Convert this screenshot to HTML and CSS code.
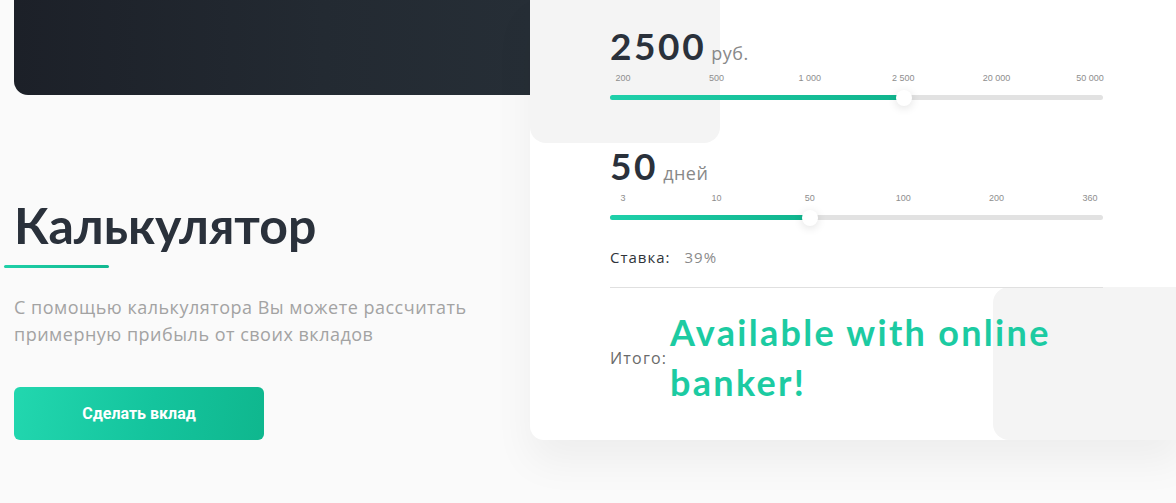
FILE: index.html
```html
<!DOCTYPE html>
<html lang="ru">
<head>
<meta charset="utf-8">
<title>Калькулятор</title>
<link rel="stylesheet" href="styles.css">
</head>
<body>
<div class="page">
  <div class="intro">
    <div class="banner"></div>
    <h1 class="title">Калькулятор</h1>
    <div class="title-line"></div>
    <p class="lead">С помощью калькулятора Вы можете рассчитать примерную прибыль от своих вкладов</p>
    <button class="cta">Сделать вклад</button>
  </div>
  <div class="calc">
    <div class="deco deco-top"></div>
    <div class="deco deco-bottom"></div>
    <div class="calc-body">
      <div class="field">
        <div class="value"><span class="num">2500</span><span class="unit">руб.</span></div>
        <div class="ticks">
          <span>200</span><span>500</span><span>1 000</span><span>2 500</span><span>20 000</span><span>50 000</span>
        </div>
        <div class="track"><div class="fill" style="width: 59.6%"><span class="thumb"></span></div></div>
      </div>
      <div class="field field-days">
        <div class="value"><span class="num">50</span><span class="unit">дней</span></div>
        <div class="ticks">
          <span>3</span><span>10</span><span>50</span><span>100</span><span>200</span><span>360</span>
        </div>
        <div class="track"><div class="fill" style="width: 40.5%"><span class="thumb"></span></div></div>
      </div>
      <div class="rate"><span class="rate-label">Ставка:</span><span class="rate-value">39%</span></div>
      <div class="total">
        <span class="total-label">Итого:</span>
        <span class="total-value">Available with online banker!</span>
      </div>
    </div>
  </div>
</div>
</body>
</html>
```
FILE: styles.css
```css
* { box-sizing: border-box; }
html, body { margin: 0; padding: 0; }
body {
  background: #fafafa;
  width: 1176px;
  height: 503px;
  overflow: hidden;
  font-family: "Lato", "Open Sans", sans-serif;
}
.page {
  display: flex;
  align-items: flex-start;
  padding-left: 14px;
}
.intro {
  width: 516px;
  flex: none;
}
.banner {
  height: 95px;
  border-radius: 0 0 0 14px;
  background: linear-gradient(90deg, #1c2028 0%, #232a32 60%, #262e36 100%);
}
.title {
  margin: 100px 0 0 0;
  font-size: 50px;
  line-height: 60px;
  font-weight: 700;
  color: #2a313b;
}
.title-line {
  margin: 10px 0 0 -10px;
  width: 105px;
  height: 3px;
  border-radius: 2px;
  background: linear-gradient(90deg, #1fd0a8, #12b890);
}
.lead {
  margin: 26px 0 0 0;
  font-family: "Open Sans", sans-serif;
  font-size: 18px;
  line-height: 27px;
  letter-spacing: 0.5px;
  color: #a3a3a3;
  width: 500px;
}
.cta {
  margin-top: 39px;
  width: 250px;
  height: 53px;
  border: 0;
  border-radius: 6px;
  background: linear-gradient(100deg, #22d7af 0%, #14c49d 55%, #0fb78e 100%);
  color: #fff;
  font-family: "Roboto", sans-serif;
  font-weight: 700;
  font-size: 16px;
  display: block;
}
.calc {
  position: relative;
  width: 653px;
  flex: none;
  height: 440px;
  background: #fff;
  border-radius: 0 0 0 14px;
  box-shadow: 0 22px 40px rgba(0, 0, 0, 0.05);
}
.deco {
  position: absolute;
  background: #f4f4f4;
}
.deco-top {
  left: 0;
  top: 0;
  width: 190px;
  height: 143px;
  border-radius: 0 0 16px 16px;
}
.deco-bottom {
  left: 463px;
  top: 287px;
  width: 200px;
  height: 153px;
  border-radius: 16px 0 0 16px;
}
.calc-body {
  position: relative;
  padding: 24px 80px 0 80px;
}
.value {
  display: flex;
  align-items: baseline;
  gap: 5px;
  height: 44px;
}
.num {
  font-size: 37px;
  font-weight: 700;
  letter-spacing: 2.6px;
  color: #2a313b;
  line-height: 44px;
}
.unit {
  font-family: "Open Sans", sans-serif;
  font-size: 18px;
  letter-spacing: 0.5px;
  color: #888;
}
.ticks {
  display: flex;
  justify-content: space-between;
  margin-top: 5px;
  height: 10px;
}
.ticks span {
  width: 26px;
  font-family: "Liberation Sans", Arial, sans-serif;
  font-size: 9px;
  line-height: 10px;
  color: #8e8e8e;
  white-space: nowrap;
  display: flex;
  justify-content: center;
}
.track {
  margin-top: 12px;
  height: 5px;
  border-radius: 3px;
  background: #e2e2e2;
}
.fill {
  position: relative;
  height: 5px;
  border-radius: 3px;
  background: linear-gradient(90deg, #1fd0aa, #10b48d);
}
.thumb {
  position: absolute;
  right: -8px;
  top: -5.5px;
  width: 16px;
  height: 16px;
  border-radius: 50%;
  background: #fff;
  box-shadow: 0 2px 10px rgba(0, 0, 0, 0.12);
}
.field-days {
  margin-top: 44px;
}
.rate {
  margin-top: 27px;
  display: flex;
  gap: 14px;
  font-family: "Open Sans", sans-serif;
  font-size: 15px;
  line-height: 20px;
  letter-spacing: 1px;
  padding-bottom: 20px;
  border-bottom: 1px solid #e0e0e0;
}
.rate-label { color: #2f343a; }
.rate-value { color: #8a8a8a; }
.total {
  margin-top: 19px;
  display: flex;
  align-items: center;
}
.total-label {
  font-family: "Open Sans", sans-serif;
  font-size: 16px;
  letter-spacing: 1.2px;
  color: #6a6a6a;
  flex: none;
  width: 60px;
  padding-top: 2px;
}
.total-value {
  font-size: 36px;
  font-weight: 700;
  letter-spacing: 2.3px;
  line-height: 50px;
  color: #1ccba2;
}
```
